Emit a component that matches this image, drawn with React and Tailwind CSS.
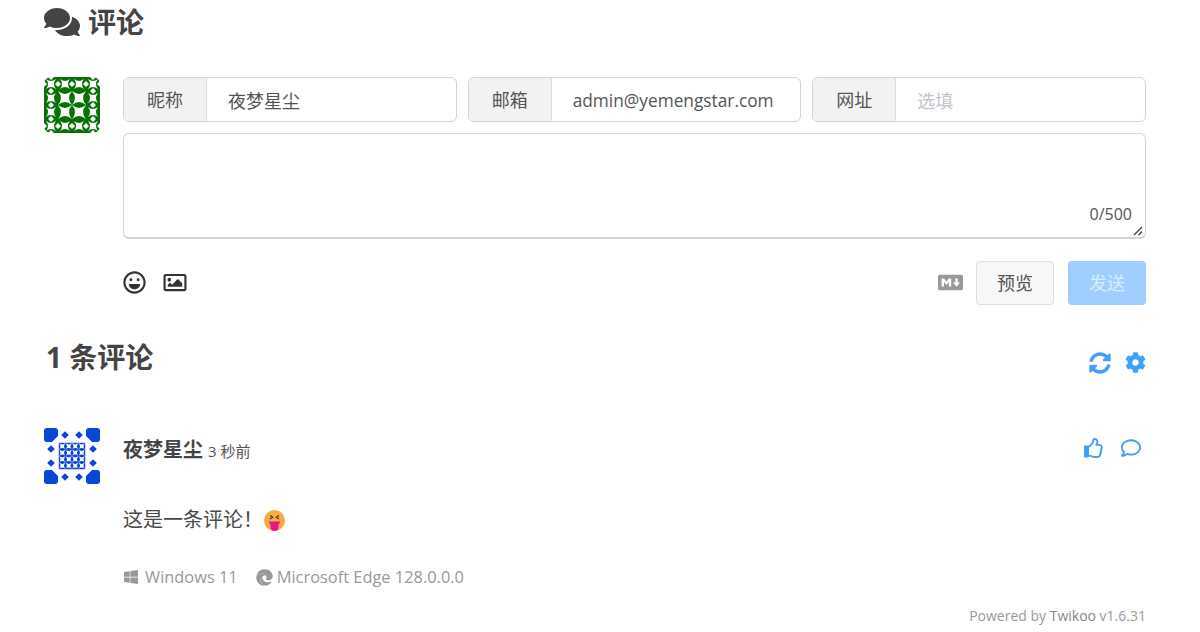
import React from 'react';
import { FaComments, FaRegLaugh, FaRegImage, FaMarkdown, FaSyncAlt, FaCog, FaRegThumbsUp, FaRegComment, FaWindows, FaEdge } from 'react-icons/fa';

const font = "font-['Open_Sans','Noto_Sans_CJK_SC',sans-serif]";

// white star whose tips sit on the corners of a square cell
const xStar = (x, y, s, depth = 0.66) => {
  const d = s * depth;
  const c = s / 2;
  return `M${x} ${y}Q${x + c} ${y + d} ${x + s} ${y}Q${x + s - d} ${y + c} ${x + s} ${y + s}Q${x + c} ${y + s - d} ${x} ${y + s}Q${x + d} ${y + c} ${x} ${y}Z`;
};

const diamond = (x, y, r) => `M${x} ${y - r}L${x + r} ${y}L${x} ${y + r}L${x - r} ${y}Z`;

function GreenAvatar() {
  const whites = [];
  [14, 28].forEach((x) => [14, 28].forEach((y) => whites.push(xStar(x, y, 14, 0.42))));
  [0, 14, 28, 42].forEach((x) => [0, 14, 28, 42].forEach((y) => {
    if (x === 0 || x === 42 || y === 0 || y === 42) {
      whites.push(xStar(x + 2, y + 2, 10, 0.4));
      if (y === 0 || y === 42) whites.push(diamond(x, y + 7, 3));
      if (x === 0 || x === 42) whites.push(diamond(x + 7, y, 3));
    }
  }));
  whites.push(diamond(56, 7, 3), diamond(56, 49, 3), diamond(7, 56, 3), diamond(49, 56, 3));
  return (
    <svg width="56" height="56" viewBox="0 0 56 56" className="shrink-0">
      <rect width="56" height="56" rx="7" fill="#067206" />
      <path d={whites.join('')} fill="#fff" />
    </svg>
  );
}

function BlueAvatar() {
  const edge = [];
  [21, 35].forEach((p) => {
    edge.push(diamond(p, 7, 3.8), diamond(p, 49, 3.8), diamond(7, p, 3.8), diamond(49, p, 3.8));
  });
  const inner = [];
  [15, 21.5, 28, 34.5].forEach((x) => [15, 21.5, 28, 34.5].forEach((y) => inner.push(xStar(x, y, 6.5, 0.46))));
  return (
    <svg width="56" height="56" viewBox="0 0 56 56" className="shrink-0">
      <g fill="#0b46d9">
        <path d="M3 0H11Q14 0 14 3V8L8 14H3Q0 14 0 11V3Q0 0 3 0Z" />
        <path d="M45 0H53Q56 0 56 3V11Q56 14 53 14H48L42 8V3Q42 0 45 0Z" />
        <path d="M3 42H8L14 48V53Q14 56 11 56H3Q0 56 0 53V45Q0 42 3 42Z" />
        <path d="M48 42H53Q56 42 56 45V53Q56 56 53 56H45Q42 56 42 53V48Z" />
        <path d={edge.join('')} />
      </g>
      <rect x="14" y="14" width="28" height="28" fill="#0b46d9" />
      <path d={inner.join('')} fill="#fff" />
      <rect x="14.5" y="14.5" width="27" height="27" fill="none" stroke="#c6d4f7" />
    </svg>
  );
}

function TongueEmoji() {
  return (
    <svg width="21" height="21" viewBox="0 0 21 21" className="shrink-0">
      <circle cx="10.5" cy="10.5" r="10.5" fill="#fbab45" />
      <path d="M6 5.5L8.7 7.2L6 8.9M15 5.5L12.3 7.2L15 8.9" fill="none" stroke="#4a3320" strokeWidth="1.2" />
      <path d="M5 11.5H16C16 13 15 14 14.5 14.5V17A4 4 0 0 1 6.5 17V14.5C6 14 5 13 5 11.5Z" fill="#e6178a" />
    </svg>
  );
}

function InputGroup({ label, value, placeholder, latin }) {
  return (
    <div className="flex-1 h-[45px] flex border border-[#d4d4d4] rounded-[6px] overflow-hidden">
      <div className="w-[83px] shrink-0 flex items-center justify-center pt-[1px] bg-[#f2f2f2] border-r border-[#dcdcdc] text-[18px] text-[#555]">
        {label}
      </div>
      <div className={`flex-1 flex items-center pl-[21px] pt-[3px] ${latin ? 'text-[17.3px]' : 'text-[18px]'} ${value ? 'text-[#555]' : 'text-[#c0c4cc]'}`}>
        {value || placeholder}
      </div>
    </div>
  );
}

export default function App() {
  return (
    <div className={`${font} w-[1200px] h-[632px] overflow-hidden bg-white pl-[44px] pr-[54px] text-[#444]`}>
      <div className="flex items-center h-[44px] text-[28px] font-bold leading-none">
        <FaComments className="w-[36px] h-[32px] text-[#444] mr-[8px]" />
        <span>评论</span>
      </div>

      <div className="flex mt-[33px] gap-[23px]">
        <GreenAvatar />
        <div className="flex-1">
          <div className="flex gap-[11px]">
            <InputGroup label="昵称" value="夜梦星尘" />
            <InputGroup label="邮箱" value="admin@yemengstar.com" latin />
            <InputGroup label="网址" placeholder="选填" />
          </div>
          <div className="relative h-[106px] mt-[11px] border border-[#d4d4d4] border-b-2 rounded-[6px]">
            <span className="absolute right-[13px] bottom-[12px] text-[16px] leading-[22px] text-[#555]">0/500</span>
            <svg width="10" height="10" viewBox="0 0 10 10" className="absolute right-[2px] bottom-[1px]">
              <path d="M1 9L9 1M5.5 9L9 5.5" stroke="#444" strokeWidth="1.4" />
            </svg>
          </div>
          <div className="flex items-center mt-[22px] h-[44px]">
            <FaRegLaugh className="w-[23px] h-[23px] text-[#333] mb-[2px]" />
            <FaRegImage className="w-[26px] h-[23px] text-[#333] ml-[16px] mb-[2px]" />
            <FaMarkdown className="w-[25px] h-[25px] text-[#999] ml-auto mb-[2px]" />
            <div className="w-[78px] h-[44px] ml-[13px] flex items-center justify-center bg-[#f8f8f8] border border-[#dcdfe6] rounded-[4px] text-[18px] text-[#555]">
              预览
            </div>
            <div className="w-[78px] h-[44px] ml-[14px] flex items-center justify-center bg-[#a0cfff] rounded-[4px] text-[18px] text-white/60">
              发送
            </div>
          </div>
        </div>
      </div>

      <div className="flex items-center justify-between mt-[31px] h-[44px]">
        <span className="text-[28px] font-bold leading-none pl-[2px] pb-[2px]">1 条评论</span>
        <div className="flex items-center gap-[14px] mt-[9px] text-[#409eff]">
          <FaSyncAlt className="w-[22px] h-[22px]" />
          <FaCog className="w-[21px] h-[21px]" />
        </div>
      </div>

      <div className="flex mt-[48px] gap-[23px]">
        <BlueAvatar />
        <div className="flex-1">
          <div className="flex items-center h-[44px]">
            <span className="text-[20px] font-bold">夜梦星尘</span>
            <span className="text-[15px] ml-[5px] mt-[2px] text-[#555]">3 秒前</span>
            <div className="flex items-center gap-[17px] ml-auto pr-[5px] pb-[4px] text-[#409eff]">
              <span className="relative block w-[20px] h-[20px]">
                <FaRegThumbsUp className="w-[20px] h-[20px]" />
                <span className="absolute left-0 top-[8px] w-[5px] h-[11px] bg-[#409eff] rounded-[1px]" />
              </span>
              <FaRegComment className="w-[20px] h-[20px]" />
            </div>
          </div>
          <div className="flex items-center h-[40px] mt-[28px] text-[20px] text-[#4a4a4a]">
            <span>这是一条评论！</span>
            <span className="ml-[1px]"><TongueEmoji /></span>
          </div>
          <div className="flex items-center mt-[23px] h-[28px] text-[16.4px] text-[#999]">
            <FaWindows className="w-[16px] h-[16px] mr-[6px]" />
            <span>Windows 11</span>
            <FaEdge className="w-[17px] h-[17px] ml-[18px] mr-[4px]" />
            <span>Microsoft Edge 128.0.0.0</span>
          </div>
        </div>
      </div>

      <div className="text-right text-[14px] leading-[20px] mt-[15px] text-[#999]">
        Powered by <span className="text-[#888]">Twikoo</span> v1.6.31
      </div>
    </div>
  );
}
